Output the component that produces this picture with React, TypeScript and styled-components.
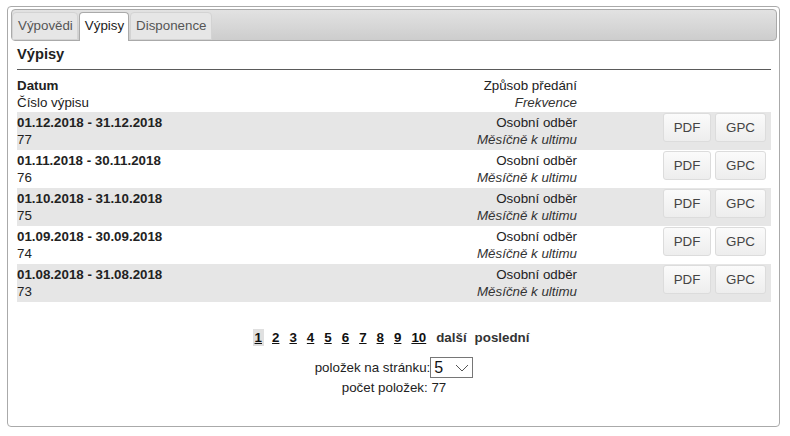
import React from 'react'
import styled, { createGlobalStyle } from 'styled-components'

interface Statement {
  from: string
  to: string
  number: number
  delivery: string
  frequency: string
}

const statements: Statement[] = [
  { from: '01.12.2018', to: '31.12.2018', number: 77, delivery: 'Osobní odběr', frequency: 'Měsíčně k ultimu' },
  { from: '01.11.2018', to: '30.11.2018', number: 76, delivery: 'Osobní odběr', frequency: 'Měsíčně k ultimu' },
  { from: '01.10.2018', to: '31.10.2018', number: 75, delivery: 'Osobní odběr', frequency: 'Měsíčně k ultimu' },
  { from: '01.09.2018', to: '30.09.2018', number: 74, delivery: 'Osobní odběr', frequency: 'Měsíčně k ultimu' },
  { from: '01.08.2018', to: '31.08.2018', number: 73, delivery: 'Osobní odběr', frequency: 'Měsíčně k ultimu' },
]

const tabs = ['Výpovědi', 'Výpisy', 'Disponence']
const pages = [1, 2, 3, 4, 5, 6, 7, 8, 9, 10]

const GlobalStyle = createGlobalStyle`
  html, body {
    margin: 0;
    padding: 0;
    background: #fff;
  }
  body {
    font-family: 'Liberation Sans', Arial, sans-serif;
    font-size: 13.33px;
    color: #222;
  }
`

const App: React.FC = () => {
  return (
    <>
      <GlobalStyle />
      <Widget>
        <TabBar>
          {tabs.map((tab) => (
            <Tab key={tab} $active={tab === 'Výpisy'}>
              {tab}
            </Tab>
          ))}
        </TabBar>
        <Panel>
          <Heading>Výpisy</Heading>
          <Table>
            <Row $head>
              <Cell>
                <strong>Datum</strong>
                <span>Číslo výpisu</span>
              </Cell>
              <RightCell>
                <span>Způsob předání</span>
                <em>Frekvence</em>
              </RightCell>
              <div />
            </Row>
            {statements.map((s, i) => (
              <Row key={s.number} $striped={i % 2 === 0}>
                <Cell>
                  <strong>
                    {s.from} - {s.to}
                  </strong>
                  <span>{s.number}</span>
                </Cell>
                <RightCell>
                  <span>{s.delivery}</span>
                  <em>{s.frequency}</em>
                </RightCell>
                <Actions>
                  <Button $width={48}>PDF</Button>
                  <Button $width={51}>GPC</Button>
                </Actions>
              </Row>
            ))}
          </Table>

          <Pager>
            {pages.map((p) => (
              <PageLink key={p} $current={p === 1}>
                {p}
              </PageLink>
            ))}
            <PagerText>další</PagerText>
            <PagerText>poslední</PagerText>
          </Pager>

          <PerPage>
            položek na stránku:
            <SelectBox>
              <SelectValue>5</SelectValue>
              <svg width="14" height="8" viewBox="0 0 14 8">
                <path d="M1 1 L7 7 L13 1" fill="none" stroke="#555" strokeWidth="1" />
              </svg>
            </SelectBox>
          </PerPage>
          <Total>počet položek: 77</Total>
        </Panel>
      </Widget>
    </>
  )
}

const Widget = styled.div`
  box-sizing: border-box;
  margin: 6px 10px 0 7px;
  height: 421px;
  border: 1px solid #aaa;
  border-radius: 4px;
  padding: 2px 2px 2px 3px;
  background: #fff;
`

const TabBar = styled.ul`
  box-sizing: border-box;
  display: flex;
  align-items: flex-end;
  gap: 1px;
  margin: 0;
  padding: 2px 0 0 0;
  height: 32px;
  list-style: none;
  border: 1px solid #aaa;
  border-radius: 4px;
  background: linear-gradient(#e2e2e2, #cdcdcd);
`

const Tab = styled.li<{ $active?: boolean }>`
  box-sizing: border-box;
  height: ${(p) => (p.$active ? 29 : 28)}px;
  margin-bottom: ${(p) => (p.$active ? -1 : 0)}px;
  padding: 0 4px 0 5px;
  line-height: 26px;
  border: 1px solid ${(p) => (p.$active ? '#aaa' : '#d3d3d3')};
  border-bottom: ${(p) => (p.$active ? 'none' : '1px solid #d3d3d3')};
  border-radius: 4px 4px 0 0;
  background: ${(p) => (p.$active ? '#fff' : '#e6e6e6')};
  color: ${(p) => (p.$active ? '#212121' : '#555')};
`

const Panel = styled.div`
  padding: 0 6px;
`

const Heading = styled.h2`
  margin: 5px 0 0;
  padding-bottom: 6px;
  font-size: 14.67px;
  line-height: 17px;
  font-weight: bold;
  color: #222;
  border-bottom: 1px solid #5a5a5a;
`

const Table = styled.div`
  margin-top: 6px;
`

const Row = styled.div<{ $striped?: boolean; $head?: boolean }>`
  display: grid;
  grid-template-columns: 1fr 300px 194px;
  padding: ${(p) => (p.$head ? 1 : 2)}px 0;
  line-height: 17px;
  background: ${(p) => (p.$striped ? '#e6e6e6' : 'transparent')};
`

const Cell = styled.div`
  display: flex;
  flex-direction: column;

  strong {
    font-weight: bold;
  }
`

const RightCell = styled(Cell)`
  align-items: flex-end;
  color: #222;

  em {
    font-style: italic;
    color: #333;
  }
`

const Actions = styled.div`
  display: flex;
  justify-content: flex-end;
  align-items: flex-start;
  gap: 4px;
  padding: 0 5px 0 0;
  margin-top: -1px;
`

const Button = styled.button<{ $width: number }>`
  box-sizing: border-box;
  width: ${(p) => p.$width}px;
  height: 29px;
  padding: 0;
  border: 1px solid #dcdcdc;
  border-radius: 3px;
  background: linear-gradient(#fbfbfb, #ededed);
  font-family: 'Liberation Sans', Arial, sans-serif;
  font-size: 13.33px;
  color: #444;
`

const Pager = styled.div`
  display: flex;
  justify-content: center;
  align-items: center;
  gap: 6px;
  margin: 27px 6px 0 0;
  line-height: 17px;
  font-weight: bold;
`

const PageLink = styled.span<{ $current?: boolean }>`
  padding: 0 2px;
  text-decoration: underline;
  color: #111;
  background: ${(p) => (p.$current ? '#e0e0e0' : 'transparent')};
`

const PagerText = styled.span`
  margin-left: 2px;
  color: #333;
`

const PerPage = styled.div`
  display: flex;
  justify-content: center;
  align-items: center;
  margin-top: 11px;
  line-height: 17px;
  color: #222;
`

const SelectBox = styled.div`
  box-sizing: border-box;
  display: flex;
  align-items: center;
  justify-content: space-between;
  width: 43px;
  height: 21px;
  padding: 0 3px 0 3px;
  border: 1px solid #767676;
  background: #fff;
`

const SelectValue = styled.span`
  font-size: 16px;
  color: #111;
`

const Total = styled.div`
  text-align: center;
  margin-top: 1px;
  line-height: 17px;
  color: #222;
`

export default App
